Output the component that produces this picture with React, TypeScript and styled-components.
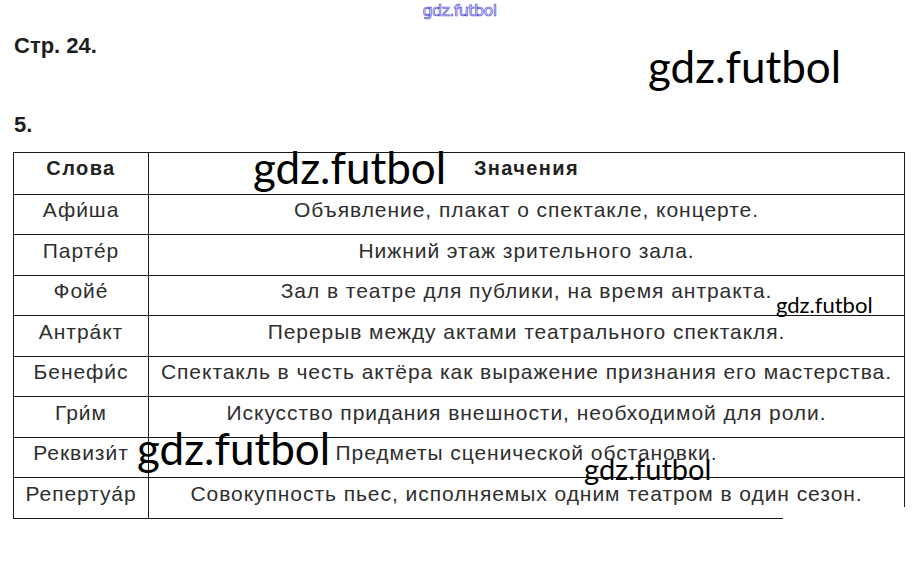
import React from "react";
import styled, { createGlobalStyle } from "styled-components";

const GlobalStyle = createGlobalStyle`
  html, body {
    margin: 0;
    padding: 0;
    background: #ffffff;
  }
  body {
    font-family: "Liberation Sans", Arial, sans-serif;
    color: #222;
  }
`;

const ROWS = [
  { word: "Афи́ша", meaning: "Объявление, плакат о спектакле, концерте." },
  { word: "Парте́р", meaning: "Нижний этаж зрительного зала." },
  { word: "Фойе́", meaning: "Зал в театре для публики, на время антракта." },
  { word: "Антра́кт", meaning: "Перерыв между актами театрального спектакля." },
  {
    word: "Бенефи́с",
    meaning: "Спектакль в честь актёра как выражение признания его мастерства.",
  },
  { word: "Гри́м", meaning: "Искусство придания внешности, необходимой для роли." },
  { word: "Реквизи́т", meaning: "Предметы сценической обстановки." },
  {
    word: "Репертуа́р",
    meaning: "Совокупность пьес, исполняемых одним театром в один сезон.",
  },
];

// watermarks printed over the scanned page
const MARKS = [
  { x: 648, y: 44, size: 44 },
  { x: 253, y: 145, size: 44 },
  { x: 776, y: 294, size: 22 },
  { x: 137, y: 426, size: 44 },
  { x: 584, y: 454, size: 29 },
];

const Page = styled.div`
  position: relative;
  width: 917px;
  height: 562px;
  overflow: hidden;
  display: flex;
  flex-direction: column;
  padding: 3px 12px 0 13px;
  box-sizing: border-box;
`;

const SiteStamp = styled.div`
  align-self: center;
  margin-left: 1px;
  font-family: "DejaVu Sans", sans-serif;
  font-size: 16px;
  line-height: 16px;
  color: transparent;
  -webkit-text-stroke: 0.7px #4848d8;
  letter-spacing: -0.6px;
`;

const Heading = styled.div<{ $gap: number }>`
  margin: ${(p) => p.$gap}px 0 0 1px;
  font-size: 22px;
  font-weight: bold;
  line-height: 26px;
  color: #1e1e1e;
`;

const Table = styled.table`
  margin-top: 14px;
  width: 892px;
  border-collapse: collapse;
  table-layout: fixed;
`;

const WordCol = styled.col`
  width: 135px;
`;

const HeadCell = styled.th`
  border: 1px solid #1a1a1a;
  height: 31.5px;
  padding: 0 0 9px;
  font-size: 20px;
  font-weight: bold;
  letter-spacing: 1.4px;
  text-align: center;
  color: #222;
`;

const Cell = styled.td`
  border: 1px solid #1a1a1a;
  height: 31.5px;
  padding: 0 0 8px;
  font-size: 21px;
  letter-spacing: 0.95px;
  text-align: center;
  color: #2e2e2e;
  white-space: nowrap;
`;

const Watermark = styled.div<{ $size: number }>`
  position: absolute;
  font-family: Lato, "Open Sans", sans-serif;
  font-size: ${(p) => p.$size}px;
  line-height: 1;
  color: #000;
  white-space: nowrap;
`;

const CornerMask = styled.div`
  position: absolute;
  left: 783px;
  top: 507px;
  width: 134px;
  height: 20px;
  background: #fff;
`;

const App = () => {
  return (
    <Page>
      <GlobalStyle />
      <SiteStamp>gdz.futbol</SiteStamp>
      <Heading $gap={14}>Стр. 24.</Heading>
      <Heading $gap={53}>5.</Heading>
      <Table>
        <colgroup>
          <WordCol />
          <col />
        </colgroup>
        <thead>
          <tr>
            <HeadCell>Слова</HeadCell>
            <HeadCell>Значения</HeadCell>
          </tr>
        </thead>
        <tbody>
          {ROWS.map((row) => (
            <tr key={row.word}>
              <Cell>{row.word}</Cell>
              <Cell>{row.meaning}</Cell>
            </tr>
          ))}
        </tbody>
      </Table>
      <CornerMask />
      {MARKS.map((m) => (
        <Watermark
          key={`${m.x}-${m.y}`}
          $size={m.size}
          style={{ left: m.x, top: m.y }}
        >
          gdz.futbol
        </Watermark>
      ))}
    </Page>
  );
};

export default App;
